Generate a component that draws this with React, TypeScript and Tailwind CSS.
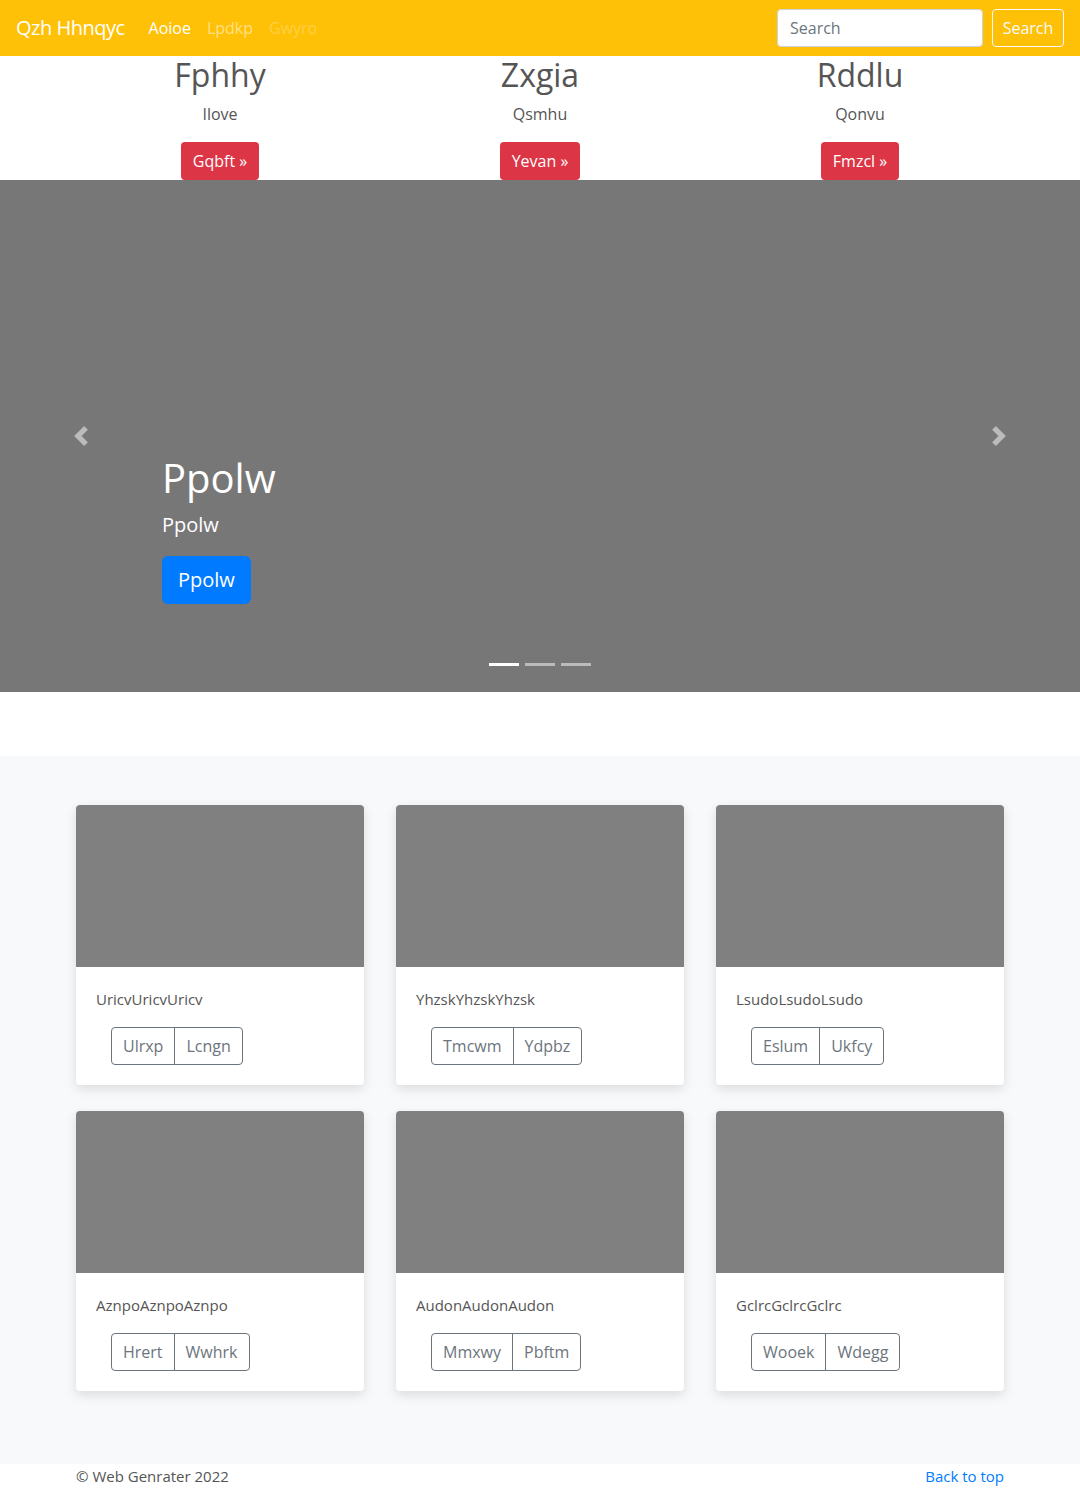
const features = [
  { title: 'Fphhy', text: 'Ilove', cta: 'Gqbft' },
  { title: 'Zxgia', text: 'Qsmhu', cta: 'Yevan' },
  { title: 'Rddlu', text: 'Qonvu', cta: 'Fmzcl' },
];

const cards = [
  { text: 'UricvUricvUricv', a: 'Ulrxp', b: 'Lcngn' },
  { text: 'YhzskYhzskYhzsk', a: 'Tmcwm', b: 'Ydpbz' },
  { text: 'LsudoLsudoLsudo', a: 'Eslum', b: 'Ukfcy' },
  { text: 'AznpoAznpoAznpo', a: 'Hrert', b: 'Wwhrk' },
  { text: 'AudonAudonAudon', a: 'Mmxwy', b: 'Pbftm' },
  { text: 'GclrcGclrcGclrc', a: 'Wooek', b: 'Wdegg' },
];

const Chevron = ({ dir }: { dir: 'left' | 'right' }) => (
  <svg viewBox="0 0 8 8" className="h-5 w-5" fill="#ffffff" fillOpacity={0.5}>
    {dir === 'left' ? (
      <path d="M5.25 0l-4 4 4 4 1.5-1.5L4.25 4l2.5-2.5L5.25 0z" />
    ) : (
      <path d="M2.75 0l-1.5 1.5L3.75 4l-2.5 2.5L2.75 8l4-4-4-4z" />
    )}
  </svg>
);

export default function App() {
  return (
    <div className="min-h-[1488px] bg-white font-['Open_Sans',sans-serif] text-[16px] leading-6 text-[#555]">
      <nav className="flex h-14 items-center bg-[#ffc107] px-4">
        <span className="mr-4 text-[20px] leading-[30px] tracking-[-0.5px] text-white">Qzh Hhnqyc</span>
        <div className="flex">
          <span className="px-2 text-white">Aoioe</span>
          <span className="px-2 text-white/50">Lpdkp</span>
          <span className="px-2 text-white/25">Gwyro</span>
        </div>
        <div className="ml-auto flex items-center gap-[9px]">
          <input
            placeholder="Search"
            className="h-[38px] w-[206px] rounded border border-[#ced4da] bg-white px-3 text-[16px] text-[#495057] placeholder:text-[#6c757d] focus:outline-none"
          />
          <button className="h-[38px] w-[72px] rounded border border-[#f8f9fa] text-[#f8f9fa]">Search</button>
        </div>
      </nav>

      <section className="mx-auto grid w-[960px] grid-cols-3">
        {features.map((f) => (
          <div key={f.title} className="flex flex-col items-center px-[15px]">
            <h2 className="mb-2 text-[32px] leading-[38px] font-medium">{f.title}</h2>
            <p className="mb-4">{f.text}</p>
            <button className="h-[38px] rounded bg-[#dc3545] px-3 text-white">{f.cta} »</button>
          </div>
        ))}
      </section>

      <section className="relative h-[512px] bg-[#777]">
        <div className="flex flex-col items-start px-[162px] pt-[274px] text-white">
          <h1 className="mb-2 text-[40px] leading-[48px] font-medium">Ppolw</h1>
          <p className="mb-4 text-[20px] leading-[30px]">Ppolw</p>
          <button className="h-12 rounded-md bg-[#007bff] px-4 text-[20px] text-white">Ppolw</button>
        </div>
        <div className="absolute inset-y-0 left-0 flex w-[162px] items-center justify-center">
          <Chevron dir="left" />
        </div>
        <div className="absolute inset-y-0 right-0 flex w-[162px] items-center justify-center">
          <Chevron dir="right" />
        </div>
        <div className="absolute bottom-[26px] left-0 right-0 flex justify-center gap-[6px]">
          <span className="h-[3px] w-[30px] bg-white" />
          <span className="h-[3px] w-[30px] bg-white/50" />
          <span className="h-[3px] w-[30px] bg-white/50" />
        </div>
      </section>

      <section className="mt-16 bg-[#f8f9fa] pt-[49px] pb-[47px]">
        <div className="mx-auto grid w-[960px] grid-cols-3">
          {cards.map((c) => (
            <div key={c.text} className="mb-[26px] px-[16px]">
              <div className="overflow-hidden rounded bg-white shadow-[0_4px_12px_rgba(0,0,0,0.12)]">
                <div className="h-[162px] bg-[#808080]" />
                <div className="p-5">
                  <p className="mb-4 text-[15px]">{c.text}</p>
                  <div className="ml-[15px] inline-flex h-[38px] rounded border border-[#6c757d] text-[#6c757d]">
                    <span className="flex items-center px-[11px]">{c.a}</span>
                    <span className="flex items-center border-l border-[#6c757d] px-[11px]">{c.b}</span>
                  </div>
                </div>
              </div>
            </div>
          ))}
        </div>
      </section>

      <footer className="mx-auto flex w-[960px] justify-between px-4 pb-12 text-[15px]">
        <span>© Web Genrater 2022</span>
        <span className="text-[#007bff]">Back to top</span>
      </footer>
    </div>
  );
}
